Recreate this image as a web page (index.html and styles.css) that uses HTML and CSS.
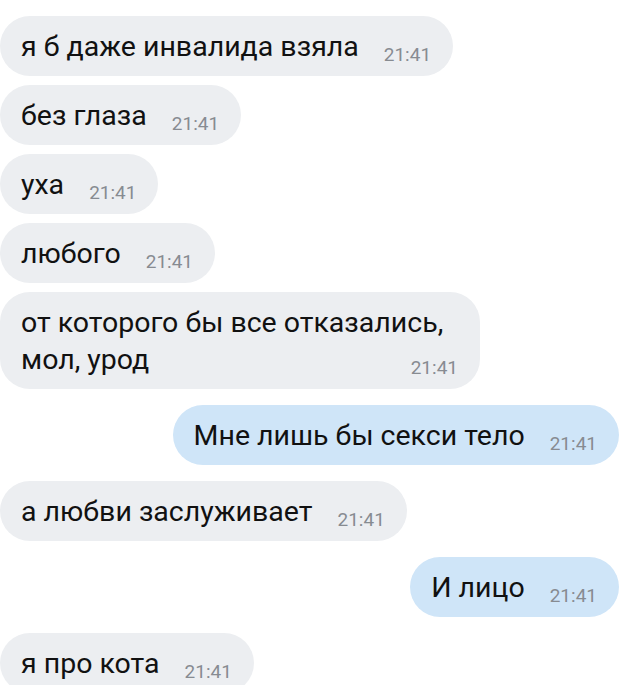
FILE: index.html
```html
<!DOCTYPE html>
<html lang="ru">
<head>
  <meta charset="UTF-8" />
  <meta name="viewport" content="width=device-width, initial-scale=1.0"/>
  <title>Диалог</title>
  <link rel="stylesheet" href="styles.css">
</head>
<body>

  <div class="chat">
    <div class="msg in"><div class="bubble">я б даже инвалида взяла<span class="time">21:41</span></div></div>
    <div class="msg in"><div class="bubble">без глаза<span class="time">21:41</span></div></div>
    <div class="msg in"><div class="bubble">уха<span class="time">21:41</span></div></div>
    <div class="msg in"><div class="bubble">любого<span class="time">21:41</span></div></div>
    <div class="msg in"><div class="bubble">от которого бы все отказались, мол, урод<span class="time">21:41</span></div></div>

    <div class="msg out new-group"><div class="bubble">Мне лишь бы секси тело<span class="time">21:41</span></div></div>

    <div class="msg in new-group"><div class="bubble">а любви заслуживает<span class="time">21:41</span></div></div>

    <div class="msg out new-group"><div class="bubble">И лицо<span class="time">21:41</span></div></div>

    <div class="msg in new-group"><div class="bubble">я про кота<span class="time">21:41</span></div></div>
  </div>

</body>
</html>
```

FILE: styles.css
```css
/* Reset */
* { margin: 0; padding: 0; box-sizing: border-box; }

body {
  font-family: Roboto, "Noto Sans", sans-serif;
  background: #ffffff;
  color: #111111;
  overflow: hidden;
}

.chat {
  display: flex;
  flex-direction: column;
  gap: 9px;
  padding: 16px 1px 0 0;
}

.msg { display: flex; }
.msg.in { justify-content: flex-start; }
.msg.out { justify-content: flex-end; }
.msg.new-group { margin-top: 7px; }

.bubble {
  max-width: 480px;
  padding: 12px 22px 11px 21px;
  border-radius: 30px;
  font-size: 28.5px;
  line-height: 37px;
  background: #eceef1;
}
.msg.out .bubble { background: #cfe5f8; }

/* time sits a little below the text baseline, pinned right */
.time {
  float: right;
  margin-left: 25px;
  margin-top: 18px;
  font-size: 19px;
  line-height: 18px;
  color: #878b91;
}
```
